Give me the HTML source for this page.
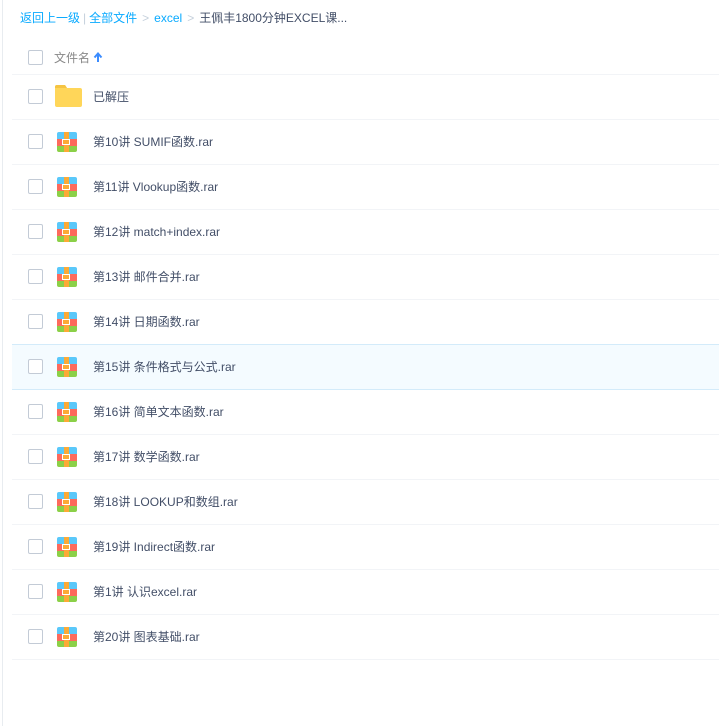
<!DOCTYPE html>
<html><head><meta charset="utf-8"><style>
body{margin:0;width:719px;height:726px;background:#fff;font-family:"Liberation Sans","Noto Sans CJK SC",sans-serif;position:relative;overflow:hidden}
.lb{position:absolute;left:2px;top:0;width:1px;height:726px;background:#e8ecf0}
.bc{position:absolute;left:20px;top:10px;font-size:12px;line-height:16px;color:#424e67;white-space:nowrap}
.bc a{color:#09aaff;text-decoration:none}
.bc .g{color:#c5d0dc;margin:0 5px}
.hd{position:absolute;left:12px;top:44px;width:707px;height:30px;border-bottom:1px solid #f2f4f7}
.cb{position:absolute;left:16px;width:13px;height:13px;border:1px solid #c3cbd6;border-radius:2px;background:#fff}
.hd .cb{top:6px}
.hd span{position:absolute;left:42px;top:5px;font-size:12px;color:#888;}
.row{position:absolute;left:12px;width:707px;height:44px;border-bottom:1px solid #f2f4f7}
.row .cb{top:14px}
.row .t{position:absolute;left:81px;top:14px;font-size:12px;color:#424e67;line-height:16px;white-space:nowrap}
.hl{background:#f4fbff;border-top:1px solid #d3ebfa;border-bottom:1px solid #d3ebfa}
.ic{position:absolute;left:45px;top:12px;width:20px;height:20px;border-radius:2px;overflow:hidden}
.ic i{position:absolute;left:0;width:20px}
.ic .a{top:0;height:7px;background:#5ac8fa}
.ic .b{top:7px;height:7px;background:#fd6a5c}
.ic .c{top:14px;height:6px;background:#8bd048}
.ic .d{left:7px;width:5px;top:0;height:20px;background:#fbaa36}
.ic .e{left:5px;width:6px;top:7px;height:4px;border:1px solid #fff;background:#fbaa36}
</style></head><body>
<div class="lb"></div>
<div class="bc"><a>返回上一级</a><span style="color:#c5d0dc;margin:0 3px">|</span><a>全部文件</a><span class="g">&gt;</span><a>excel</a><span class="g">&gt;</span>王佩丰1800分钟EXCEL课...</div>
<div class="hd"><div class="cb"></div><span>文件名 <svg width="10" height="11" viewBox="0 0 10 11" style="vertical-align:-1px"><path d="M5 10V2M1.5 5.5L5 1.5 8.5 5.5" stroke="#3b8cff" stroke-width="2" fill="none"/></svg></span></div>
<div class="row" style="top:75px"><div class="cb"></div>
<svg style="position:absolute;left:43px;top:10px" width="27" height="22"><path d="M0 2a2 2 0 0 1 2-2h8l2 3h13a2 2 0 0 1 2 2v15a2 2 0 0 1-2 2H2a2 2 0 0 1-2-2z" fill="#ffd659"/><path d="M0 2a2 2 0 0 1 2-2h8l2 3H0z" fill="#f5c443"/></svg>
<div class="t">已解压</div></div>
<div class="row" style="top:120px"><div class="cb"></div><div class="ic"><i class="a"></i><i class="b"></i><i class="c"></i><i class="d"></i><i class="e"></i></div><div class="t">第10讲 SUMIF函数.rar</div></div>
<div class="row" style="top:165px"><div class="cb"></div><div class="ic"><i class="a"></i><i class="b"></i><i class="c"></i><i class="d"></i><i class="e"></i></div><div class="t">第11讲 Vlookup函数.rar</div></div>
<div class="row" style="top:210px"><div class="cb"></div><div class="ic"><i class="a"></i><i class="b"></i><i class="c"></i><i class="d"></i><i class="e"></i></div><div class="t">第12讲 match+index.rar</div></div>
<div class="row" style="top:255px"><div class="cb"></div><div class="ic"><i class="a"></i><i class="b"></i><i class="c"></i><i class="d"></i><i class="e"></i></div><div class="t">第13讲 邮件合并.rar</div></div>
<div class="row" style="top:300px"><div class="cb"></div><div class="ic"><i class="a"></i><i class="b"></i><i class="c"></i><i class="d"></i><i class="e"></i></div><div class="t">第14讲 日期函数.rar</div></div>
<div class="row hl" style="top:344px"><div class="cb"></div><div class="ic"><i class="a"></i><i class="b"></i><i class="c"></i><i class="d"></i><i class="e"></i></div><div class="t">第15讲 条件格式与公式.rar</div></div>
<div class="row" style="top:390px"><div class="cb"></div><div class="ic"><i class="a"></i><i class="b"></i><i class="c"></i><i class="d"></i><i class="e"></i></div><div class="t">第16讲 简单文本函数.rar</div></div>
<div class="row" style="top:435px"><div class="cb"></div><div class="ic"><i class="a"></i><i class="b"></i><i class="c"></i><i class="d"></i><i class="e"></i></div><div class="t">第17讲 数学函数.rar</div></div>
<div class="row" style="top:480px"><div class="cb"></div><div class="ic"><i class="a"></i><i class="b"></i><i class="c"></i><i class="d"></i><i class="e"></i></div><div class="t">第18讲 LOOKUP和数组.rar</div></div>
<div class="row" style="top:525px"><div class="cb"></div><div class="ic"><i class="a"></i><i class="b"></i><i class="c"></i><i class="d"></i><i class="e"></i></div><div class="t">第19讲 Indirect函数.rar</div></div>
<div class="row" style="top:570px"><div class="cb"></div><div class="ic"><i class="a"></i><i class="b"></i><i class="c"></i><i class="d"></i><i class="e"></i></div><div class="t">第1讲 认识excel.rar</div></div>
<div class="row" style="top:615px"><div class="cb"></div><div class="ic"><i class="a"></i><i class="b"></i><i class="c"></i><i class="d"></i><i class="e"></i></div><div class="t">第20讲 图表基础.rar</div></div>
</body></html>
